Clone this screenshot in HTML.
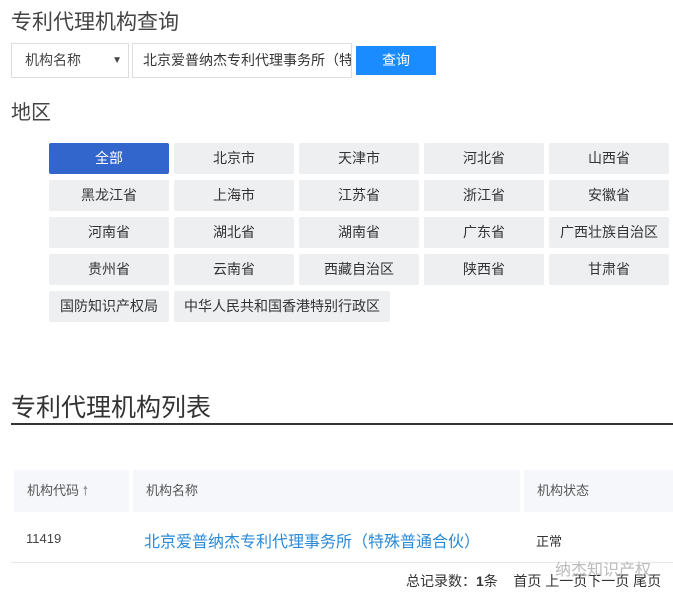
<!DOCTYPE html>
<html><head><meta charset="utf-8"><style>
*{margin:0;padding:0;box-sizing:border-box}
body{width:673px;height:598px;background:#fff;font-family:"Liberation Sans","Noto Sans CJK SC",sans-serif;color:#333;position:relative;overflow:hidden}
.a{position:absolute;white-space:nowrap}
.b{position:absolute;width:120px;height:31px;background:#eeeff1;border-radius:2px;font-size:14px;color:#333;text-align:center;line-height:31px}
.th{position:absolute;top:470px;height:42px;background:#f5f7fa;font-size:13px;color:#555;line-height:42px;padding-left:13px}
</style></head><body>
<div class="a" style="left:11px;top:6px;font-size:21px;color:#444">专利代理机构查询</div>
<div class="a" style="left:11px;top:43px;width:118px;height:35px;border:1px solid #ddd;font-size:14px;line-height:33px;padding-left:13px;color:#444">机构名称<span style="position:absolute;right:6px;font-size:10px">▼</span></div>
<div class="a" style="left:132px;top:43px;width:220px;height:35px;border:1px solid #ddd;font-size:14px;line-height:33px;padding-left:10px;overflow:hidden;color:#333">北京爱普纳杰专利代理事务所（特</div>
<div class="a" style="left:356px;top:46px;width:80px;height:29px;background:#1a8cff;color:#fff;font-size:14px;text-align:center;line-height:29px">查询</div>
<div class="a" style="left:11px;top:96px;font-size:20px;color:#444">地区</div>
<div class="b" style="left:49px;top:143px;background:#3366cc;color:#fff">全部</div>
<div class="b" style="left:174px;top:143px">北京市</div>
<div class="b" style="left:299px;top:143px">天津市</div>
<div class="b" style="left:424px;top:143px">河北省</div>
<div class="b" style="left:549px;top:143px">山西省</div>
<div class="b" style="left:49px;top:180px">黑龙江省</div>
<div class="b" style="left:174px;top:180px">上海市</div>
<div class="b" style="left:299px;top:180px">江苏省</div>
<div class="b" style="left:424px;top:180px">浙江省</div>
<div class="b" style="left:549px;top:180px">安徽省</div>
<div class="b" style="left:49px;top:217px">河南省</div>
<div class="b" style="left:174px;top:217px">湖北省</div>
<div class="b" style="left:299px;top:217px">湖南省</div>
<div class="b" style="left:424px;top:217px">广东省</div>
<div class="b" style="left:549px;top:217px">广西壮族自治区</div>
<div class="b" style="left:49px;top:254px">贵州省</div>
<div class="b" style="left:174px;top:254px">云南省</div>
<div class="b" style="left:299px;top:254px">西藏自治区</div>
<div class="b" style="left:424px;top:254px">陕西省</div>
<div class="b" style="left:549px;top:254px">甘肃省</div>
<div class="b" style="left:49px;top:291px">国防知识产权局</div>
<div class="b" style="left:174px;top:291px;width:216px">中华人民共和国香港特别行政区</div>
<div class="a" style="left:11px;top:388px;font-size:25px;color:#333">专利代理机构列表</div>
<div class="a" style="left:11px;top:423px;width:662px;height:2px;background:#333"></div>
<div class="th" style="left:14px;width:115px">机构代码 <span style="color:#999">🠕</span></div>
<div class="th" style="left:133px;width:387px">机构名称</div>
<div class="th" style="left:524px;width:149px">机构状态</div>
<div class="a" style="left:26px;top:531px;font-size:13px;color:#444">11419</div>
<div class="a" style="left:144px;top:528px;font-size:16px;color:#2a8ad8">北京爱普纳杰专利代理事务所（特殊普通合伙）</div>
<div class="a" style="left:536px;top:531px;font-size:13px;color:#333">正常</div>
<div class="a" style="left:11px;top:562px;width:662px;height:1px;background:#e8e8e8"></div>
<div class="a" style="left:406px;top:571px;font-size:14px;color:#333">总记录数：<b>1</b>条 &nbsp;&nbsp; 首页 上一页下一页 尾页</div>
<div class="a" style="left:555px;top:556px;font-size:16px;color:#bbb">纳杰知识产权</div>
</body></html>
